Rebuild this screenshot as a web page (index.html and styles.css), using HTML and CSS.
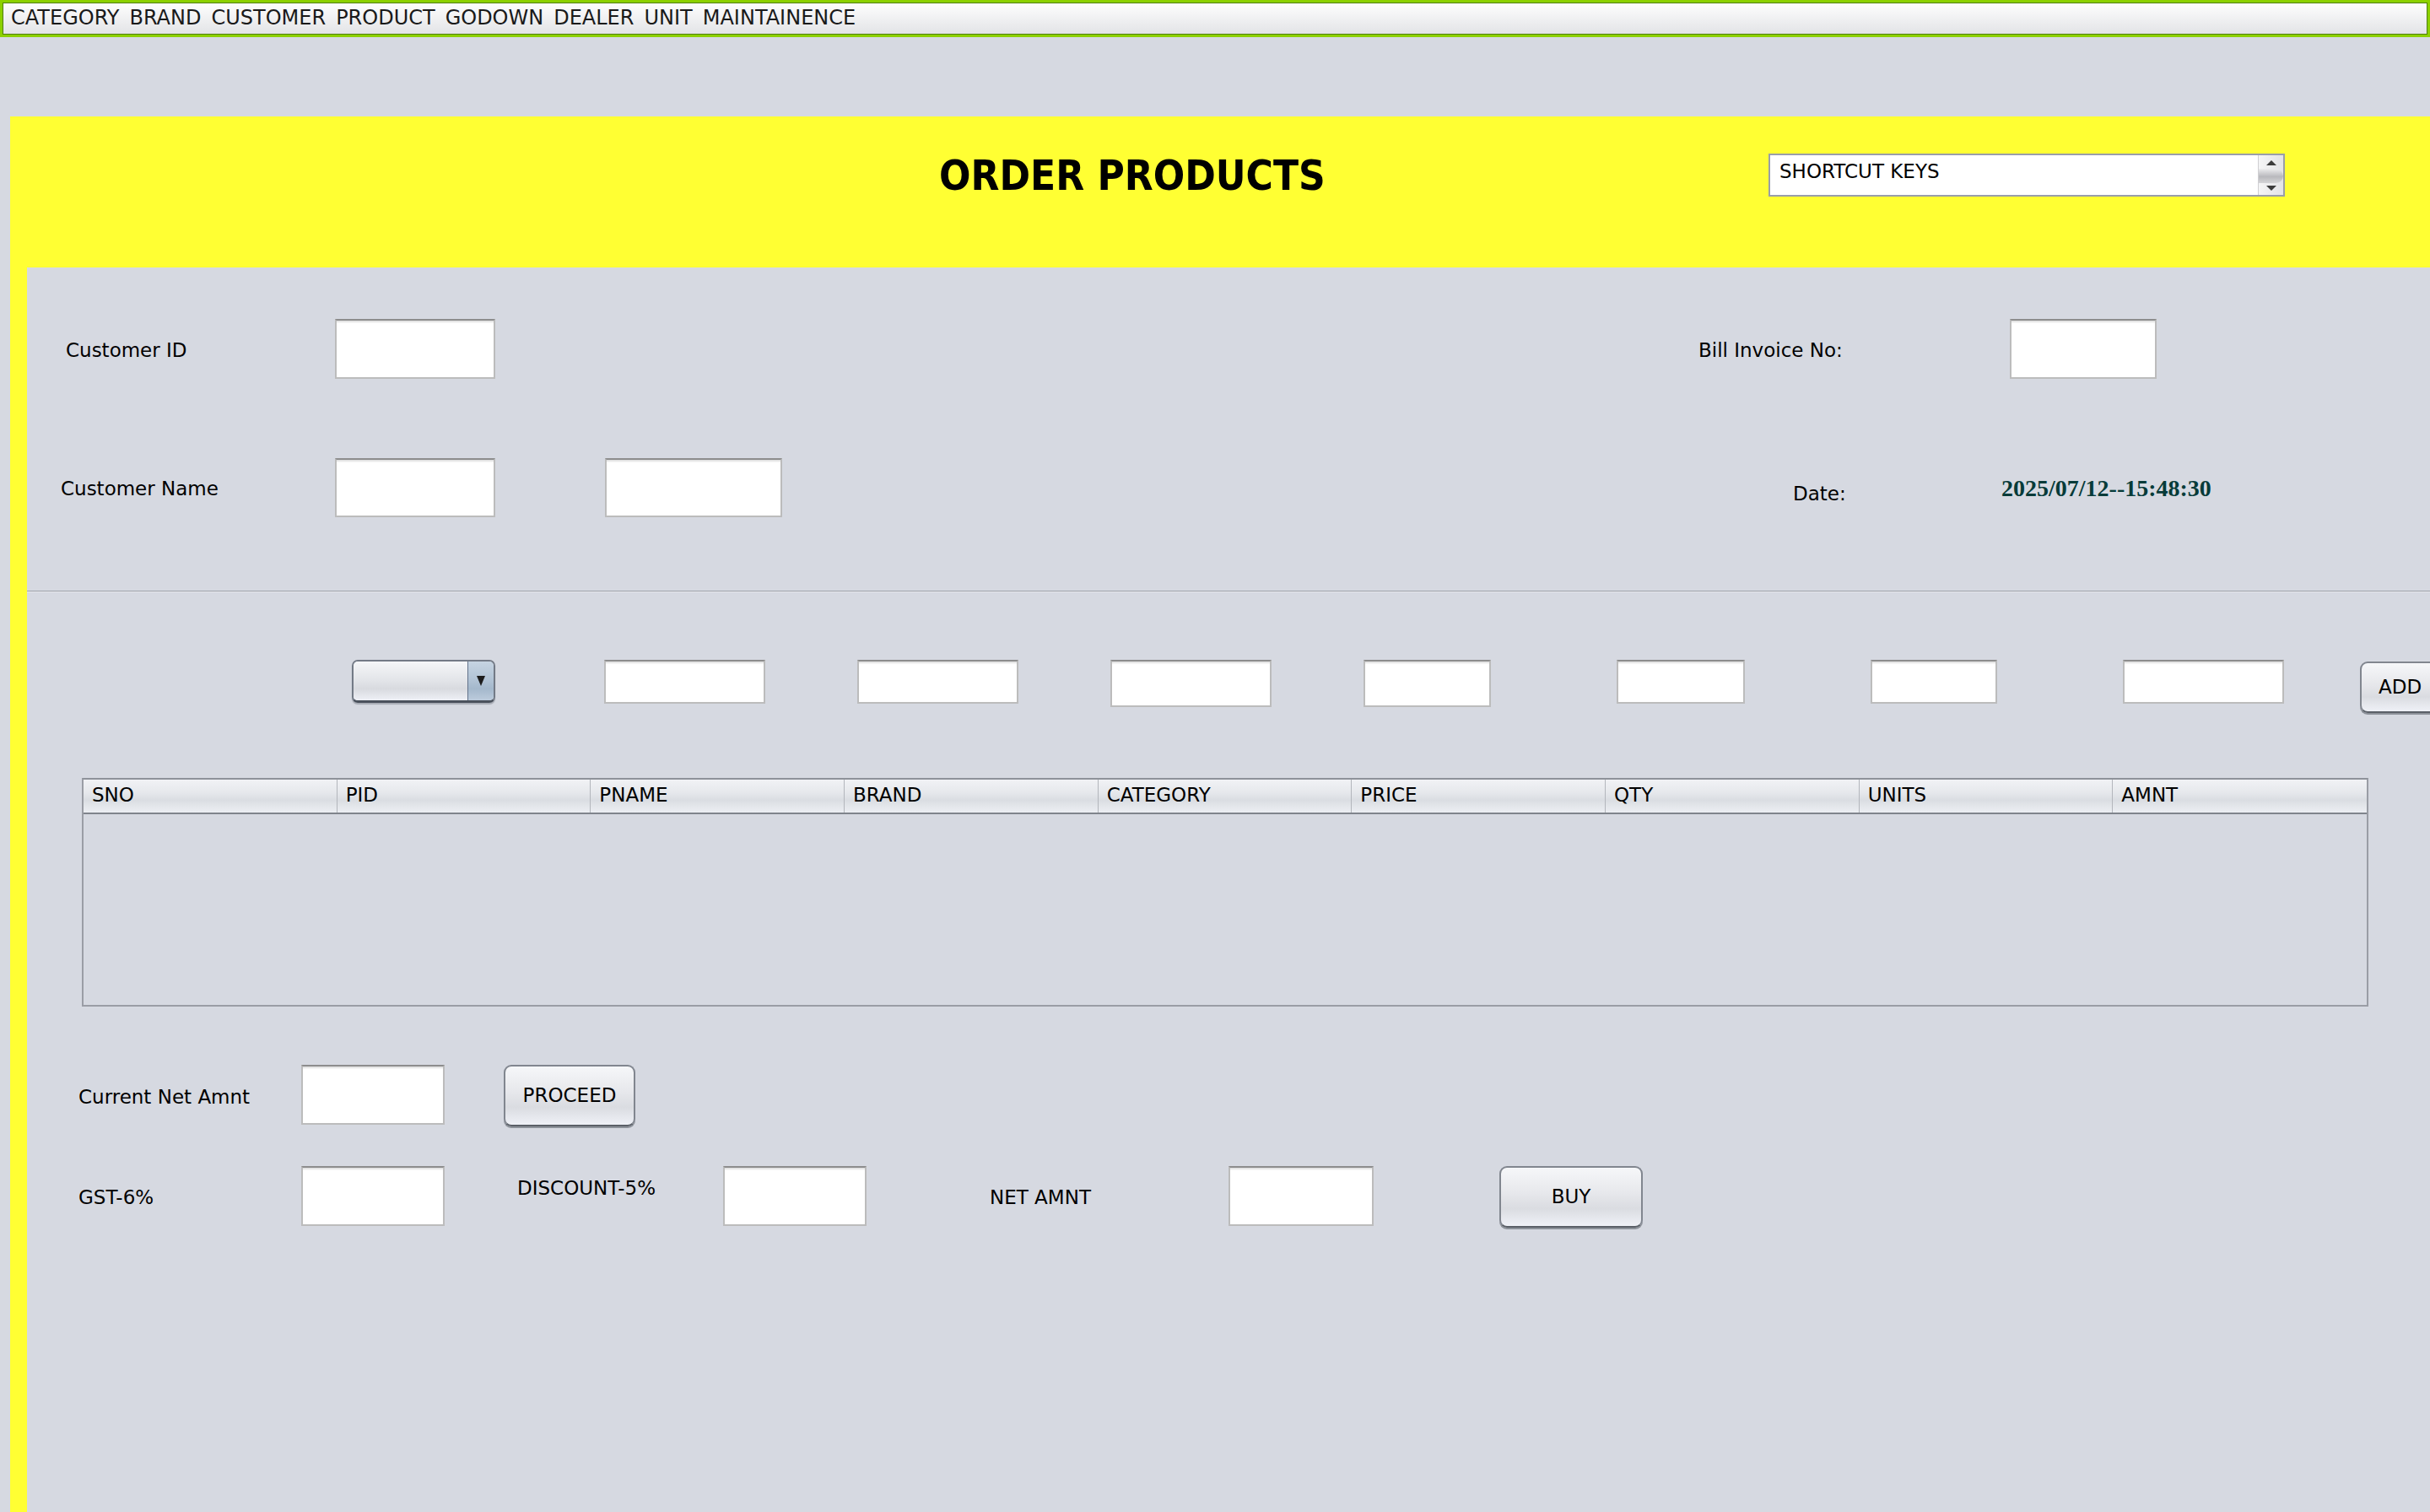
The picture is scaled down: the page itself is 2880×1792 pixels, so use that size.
FILE: index.html
```html
<!DOCTYPE html>
<html>
<head>
<meta charset="utf-8">
<title>Order Products</title>
<link rel="stylesheet" href="styles.css">
</head>
<body>
<div class="menubar">
  <span class="menu-item">CATEGORY</span>
  <span class="menu-item">BRAND</span>
  <span class="menu-item">CUSTOMER</span>
  <span class="menu-item">PRODUCT</span>
  <span class="menu-item">GODOWN</span>
  <span class="menu-item">DEALER</span>
  <span class="menu-item">UNIT</span>
  <span class="menu-item">MAINTAINENCE</span>
</div>
<div class="frame">
  <div class="header">
    <h1 class="title">ORDER PRODUCTS</h1>
    <div class="shortcut">
      <span class="shortcut-text">SHORTCUT KEYS</span>
      <div class="spin">
        <svg class="tri" width="12" height="6" viewBox="0 0 12 6"><path d="M6 0 L12 6 L0 6 Z" fill="#3c3c3c"/></svg>
        <div class="thumb"></div>
        <svg class="tri" width="12" height="6" viewBox="0 0 12 6"><path d="M0 0 L12 0 L6 6 Z" fill="#3c3c3c"/></svg>
      </div>
    </div>
  </div>
  <div class="content">
    <div class="row row-1">
      <span class="lbl lbl-cid">Customer ID</span>
      <input class="tf w190" type="text">
      <span class="lbl lbl-bill">Bill Invoice No:</span>
      <input class="tf w174" type="text">
    </div>
    <div class="row row-2">
      <span class="lbl lbl-cname">Customer Name</span>
      <input class="tf w190 h70" type="text">
      <input class="tf w210 h70 ml130" type="text">
      <span class="lbl lbl-date">Date:</span>
      <span class="date-value">2025/07/12--15:48:30</span>
    </div>
    <div class="separator"></div>
    <div class="row row-3">
      <div class="combo">
        <div class="combo-body"></div>
        <div class="combo-arrow">
          <svg width="10" height="12" viewBox="0 0 10 12"><path d="M0 0 L10 0 L5 12 Z" fill="#1c1c1c"/></svg>
        </div>
      </div>
      <input class="tf w191 h52 ml129" type="text">
      <input class="tf w191 h52 ml109" type="text">
      <input class="tf w191 h56 ml109" type="text">
      <input class="tf w151 h56 ml109" type="text">
      <input class="tf w152 h52 ml149" type="text">
      <input class="tf w150 h52 ml149" type="text">
      <input class="tf w191 h52 ml149" type="text">
      <button class="btn btn-add">ADD</button>
    </div>
    <div class="table">
      <div class="thead">
        <div class="th">SNO</div>
        <div class="th">PID</div>
        <div class="th">PNAME</div>
        <div class="th">BRAND</div>
        <div class="th">CATEGORY</div>
        <div class="th">PRICE</div>
        <div class="th">QTY</div>
        <div class="th">UNITS</div>
        <div class="th">AMNT</div>
      </div>
    </div>
    <div class="row row-a">
      <span class="lbl lbl-cur">Current Net Amnt</span>
      <input class="tf w170" type="text">
      <button class="btn btn-proceed">PROCEED</button>
    </div>
    <div class="row row-b">
      <span class="lbl lbl-gst">GST-6%</span>
      <input class="tf w170" type="text">
      <span class="lbl lbl-disc">DISCOUNT-5%</span>
      <input class="tf w170" type="text">
      <span class="lbl lbl-net">NET AMNT</span>
      <input class="tf w172" type="text">
      <button class="btn btn-buy">BUY</button>
    </div>
  </div>
</div>
</body>
</html>
```
FILE: styles.css
```css
* { box-sizing: border-box; }
html, body { margin: 0; padding: 0; }
body {
  width: 2880px;
  height: 1792px;
  overflow: hidden;
  background: #d6d9e1;
  font-family: "DejaVu Sans", "Liberation Sans", sans-serif;
  font-size: 23px;
  line-height: 27px;
  color: #000;
}

/* Menu bar */
.menubar {
  height: 44px;
  border: 3px solid #8cd000;
  box-shadow: inset 0 0 0 1px #4f7f00;
  background: linear-gradient(#fefefe, #e2e3e6);
  display: flex;
  gap: 12px;
  padding: 4px 0 0 10px;
  font-size: 24px;
  line-height: 28px;
  color: #1a1a1a;
}
.menu-item { white-space: nowrap; }

/* Frame */
.frame {
  margin: 94px 0 0 12px;
  height: 1654px;
  background: #ffff33;
  display: flex;
  flex-direction: column;
}
.header {
  flex: none;
  height: 179px;
  display: flex;
  align-items: flex-start;
}
.title {
  margin: 46px 0 0 1101px;
  width: 983px;
  flex: none;
  font-family: "DejaVu Sans Condensed", "DejaVu Sans", sans-serif;
  font-stretch: condensed;
  font-weight: bold;
  font-size: 49px;
  line-height: 49px;
  white-space: nowrap;
}
.shortcut {
  flex: none;
  margin-top: 44px;
  width: 612px;
  height: 51px;
  border: 2px solid #9a9ea8;
  background: #fff;
  display: flex;
}
.shortcut-text {
  padding: 6px 0 0 11px;
  white-space: nowrap;
}
.spin {
  margin-left: auto;
  width: 30px;
  border-left: 1px solid #cfcfd2;
  background: linear-gradient(90deg, #f5f5f6, #e3e3e6);
  display: flex;
  flex-direction: column;
  align-items: center;
  justify-content: space-between;
  padding: 6px 0 5px;
}
.thumb {
  align-self: stretch;
  height: 17px;
  border-radius: 0 12px 12px 0;
  background: linear-gradient(#ececee, #b9b9bd 55%, #d4d4d7);
}

/* Content */
.content {
  flex: 1;
  margin-left: 20px;
  background: #d6d9e1;
  overflow: hidden;
}
.row {
  display: flex;
  align-items: flex-start;
}
.lbl {
  flex: none;
  white-space: nowrap;
}
.tf {
  flex: none;
  display: block;
  margin: 0;
  padding: 0;
  height: 71px;
  background: #fff;
  border: 2px solid #bcbcbc;
  border-top-color: #8d8d8d;
  box-shadow: inset 0 4px 2px -2px #e0e0e0;
  font: inherit;
  outline: none;
  -webkit-appearance: none;
  appearance: none;
  border-radius: 0;
}
.w150 { width: 150px; }
.w151 { width: 151px; }
.w152 { width: 152px; }
.w170 { width: 170px; }
.w172 { width: 172px; }
.w174 { width: 174px; }
.w190 { width: 190px; }
.w191 { width: 191px; }
.w210 { width: 210px; }
.h52 { height: 52px; }
.h56 { height: 56px; }
.h70 { height: 70px; }
.ml109 { margin-left: 109px; }
.ml129 { margin-left: 129px; }
.ml130 { margin-left: 130px; }
.ml149 { margin-left: 149px; }

/* Row 1 */
.row-1 { margin-top: 61px; padding-left: 46px; }
.lbl-cid { width: 319px; margin-top: 24px; }
.lbl-bill { width: 369px; margin-left: 1426px; margin-top: 24px; }

/* Row 2 */
.row-2 { margin-top: 94px; padding-left: 40px; height: 70px; }
.lbl-cname { width: 325px; margin-top: 23px; }
.lbl-date { width: 247px; margin-left: 1198px; margin-top: 29px; }
.date-value {
  flex: none;
  margin-top: 20px;
  font-family: "Liberation Serif", "Times New Roman", serif;
  font-weight: bold;
  font-size: 28px;
  line-height: 32px;
  color: #073b39;
  white-space: nowrap;
}

.separator {
  margin-top: 87px;
  height: 2px;
  border-top: 1px solid #9da1a9;
  border-bottom: 1px solid #e6e8ec;
}

/* Row 3 */
.row-3 { margin-top: 80px; padding-left: 385px; }
.combo {
  flex: none;
  width: 170px;
  height: 51px;
  display: flex;
  border: 2px solid #737a86;
  border-bottom: 3px solid #4a515c;
  border-radius: 7px;
  overflow: hidden;
  box-shadow: 0 2px 1px rgba(80, 86, 96, 0.35);
}
.combo-body {
  flex: 1;
  background: linear-gradient(#f5f6f8 0%, #e2e4e8 50%, #d8dadf 70%, #eef0f6 100%);
}
.combo-arrow {
  width: 31px;
  border-left: 1px solid #62728a;
  background: linear-gradient(#c6d4e2 0%, #b0c2d4 50%, #a4b8cc 70%, #bccbdc 100%);
  display: flex;
  align-items: center;
  justify-content: center;
}

.btn {
  flex: none;
  margin: 0;
  padding: 0;
  font: inherit;
  color: #000;
  border: 2px solid #81868f;
  border-bottom-color: #5b6068;
  border-radius: 9px;
  background: linear-gradient(#f6f7f9 0%, #e6e7eb 45%, #dadce1 70%, #eff1f7 100%);
  box-shadow: 0 2px 0 #8c9199;
  display: flex;
  align-items: center;
  justify-content: center;
}
.btn-add { margin-left: 90px; margin-top: 2px; width: 120px; height: 61px; justify-content: flex-start; padding-left: 20px; }
.btn-proceed { margin-left: 70px; width: 156px; height: 73px; }
.btn-buy { margin-left: 149px; width: 170px; height: 73px; }

/* Table */
.table {
  margin: 77px 0 0 65px;
  width: 2710px;
  height: 271px;
  border: 2px solid #9a9da5;
  border-top-color: #8e929a;
}
.thead {
  height: 41px;
  display: grid;
  grid-template-columns: repeat(9, 1fr);
  border-bottom: 2px solid #7f848c;
  background: linear-gradient(#f1f2f5 0%, #e6e8ec 40%, #dadde2 62%, #e4e7eb 82%, #eceef3 100%);
}
.th {
  padding: 5px 0 0 10px;
  border-right: 1px solid #b3b6bc;
  white-space: nowrap;
}
.th:last-child { border-right: none; }

/* Bottom rows */
.row-a { margin-top: 69px; padding-left: 61px; }
.lbl-cur { width: 264px; margin-top: 25px; }
.row-b { margin-top: 47px; padding-left: 61px; }
.lbl-gst { width: 264px; margin-top: 24px; }
.lbl-disc { width: 244px; margin-left: 86px; margin-top: 13px; }
.lbl-net { width: 283px; margin-left: 146px; margin-top: 24px; }
```
